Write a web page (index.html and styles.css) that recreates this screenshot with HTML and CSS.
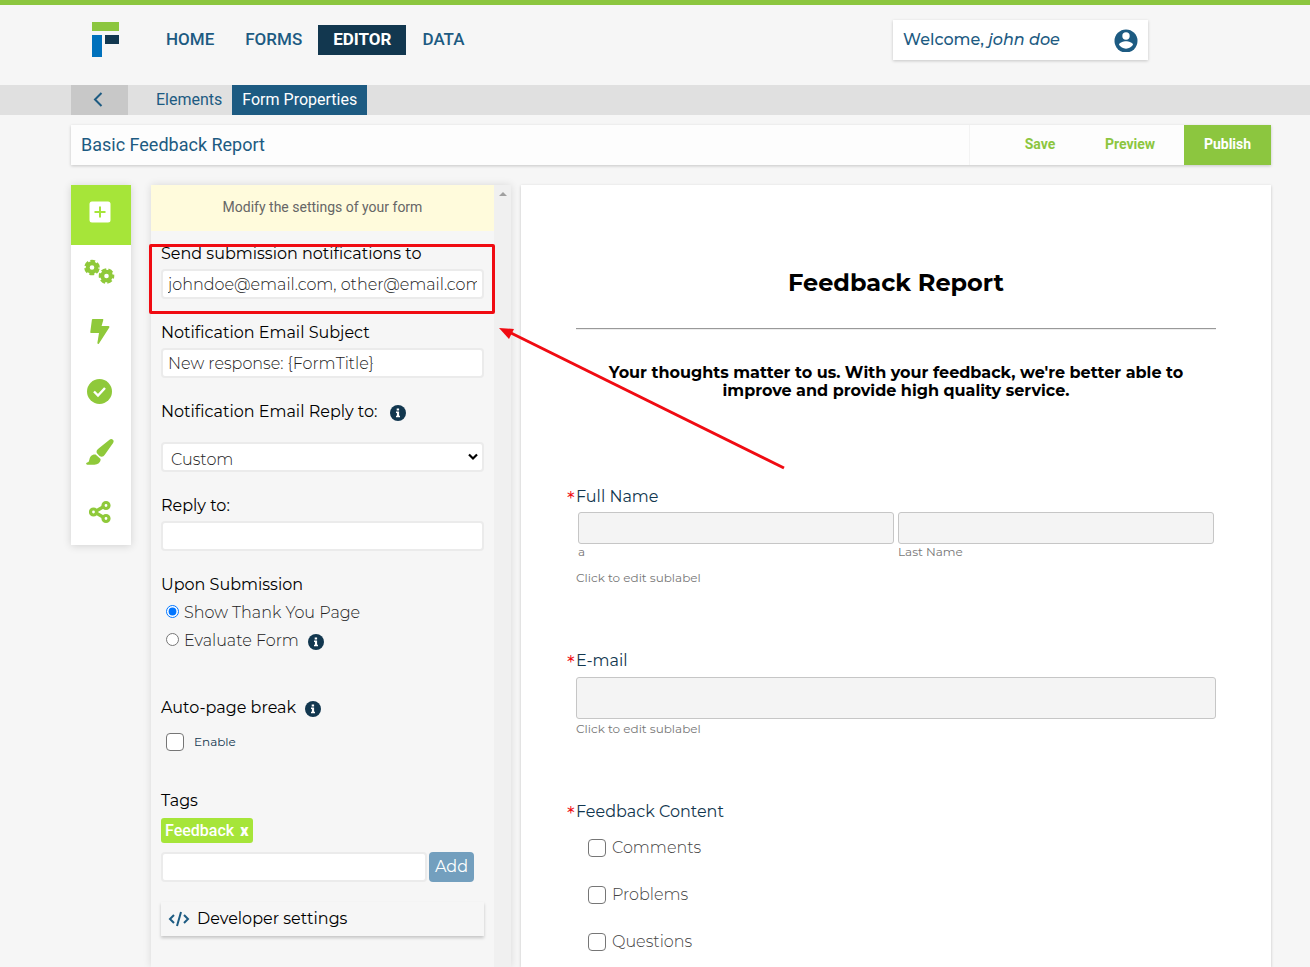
FILE: index.html
```html
<!DOCTYPE html>
<html lang="en">
<head>
<meta charset="utf-8">
<meta name="viewport" content="width=device-width, initial-scale=1">
<title>Form Properties</title>
<link rel="stylesheet" href="styles.css">
</head>
<body>
<svg class="defs" aria-hidden="true">
  <symbol id="info" viewBox="0 0 16 16"><circle cx="8" cy="8" r="8" fill="#12374f"/><path fill="#fff" d="M6.7 3.4h2.4v2H6.7zM6 6.6h3.1v4.2h.9v1.5H6v-1.5h.9V8H6z"/></symbol>
</svg>
<header class="topbar">
  <a class="logo" href="#" aria-label="Home page">
    <svg width="27" height="35" viewBox="0 0 27 35"><path fill="#8cc63f" d="M0 0h27v9H0z"/><path fill="#0071bc" d="M0 13h10v22H0z"/><path fill="#12374f" d="M13 13h14v9H13z"/></svg>
  </a>
  <nav class="main-nav">
    <a href="#">HOME</a>
    <a href="#">FORMS</a>
    <a class="active" href="#">EDITOR</a>
    <a href="#">DATA</a>
  </nav>
  <button class="welcome" type="button">
    <span>Welcome, <em>john doe</em></span>
    <svg width="24" height="24" viewBox="0 0 24 24"><circle cx="12" cy="13" r="11.500" fill="#1d5b82"/><circle cx="12" cy="8" r="3.700" fill="#fff"/><path fill="#fff" d="M5 16.800c0-2.400 4.600-3.600 7-3.600s7 1.200 7 3.600c-1.500 2.300-4 3.900-7 3.900s-5.500-1.600-7-3.900z"/></svg>
  </button>
</header>
<nav class="sub-nav">
  <button class="back" type="button" aria-label="Back"><svg width="10" height="16" viewBox="0 0 10 16"><path d="M8.500 1 2 7.500 8.500 14" fill="none" stroke="#1d5b82" stroke-width="2"/></svg></button>
  <a href="#">Elements</a>
  <a class="active" href="#">Form Properties</a>
</nav>
<section class="title-bar">
  <input class="form-name" type="text" aria-label="Form name" value="Basic Feedback Report">
  <div class="actions">
    <button type="button">Save</button>
    <button type="button">Preview</button>
    <button class="publish" type="button">Publish</button>
  </div>
</section>
<main class="workspace">
  <aside class="rail">
    <button class="active" type="button" aria-label="Add"><svg width="22" height="22" viewBox="0 0 22 22"><rect x=".5" y=".5" width="21" height="21" rx="2.500" fill="#fff"/><path d="M11 5.500v11M5.500 11h11" stroke="#a6e539" stroke-width="2"/></svg></button>
    <button type="button" aria-label="Settings">
      <svg width="32" height="26" viewBox="0 0 32 26"><g fill="none" stroke="#8fc93a"><circle cx="8" cy="8.500" r="4.300" stroke-width="4"/><circle cx="8" cy="8.500" r="6.400" stroke-width="2.800" stroke-dasharray="4.600 2.102" stroke-dashoffset="-1"/><circle cx="22.500" cy="17" r="4.300" stroke-width="4"/><circle cx="22.500" cy="17" r="6.400" stroke-width="2.800" stroke-dasharray="4.600 2.102" stroke-dashoffset="2.300"/></g></svg>
    </button>
    <button type="button" aria-label="Actions"><svg width="20" height="26" viewBox="0 0 20 26"><path fill="#8fc93a" d="M2.800 0h9.700c.6 0 1 .5.800 1.100L11.600 7h6.900c.8 0 1.200.8.800 1.400L9 24.400c-.6.900-1.800.5-1.600-.6L9 14H1.200c-.6 0-1-.5-.9-1L1.900.8c0-.5.400-.8.900-.8z"/></svg></button>
    <button type="button" aria-label="Validation"><svg width="26" height="26" viewBox="0 0 26 26"><circle cx="12.500" cy="12.500" r="12.500" fill="#8fc93a"/><path d="m7 12.500 4 4 7-7.500" fill="none" stroke="#fff" stroke-width="2.400"/></svg></button>
    <button type="button" aria-label="Design"><svg width="28" height="26" viewBox="0 0 28 26"><path fill="#8fc93a" d="M26.900.8c1 .9.900 2 .2 3.100l-8.300 11.900c-1.400 2-3.400 2.400-5.300 1.100l-2.300-2.300c-1.200-1.700-.6-3.400.8-4.700L23.500.7c1.200-1 2.400-.8 3.400.1zM9.600 15.500l5 4.500c.2 3.400-2.700 5.700-6.200 5.700H1.300c-1.300 0-1.700-1.900-.2-2.200 3.100-.5 1.500-3.900 3.700-6.300 1.200-1.400 3.100-2 4.800-1.700z"/></svg></button>
    <button type="button" aria-label="Share"><svg width="22" height="24" viewBox="0 0 22 24"><g fill="none" stroke="#8fc93a" stroke-width="3.200"><path d="m8 10.500 6-3.500M8 13.500l6 3.500"/><circle cx="4.500" cy="12" r="3"/><circle cx="17" cy="5.500" r="3"/><circle cx="17" cy="18.500" r="3"/></g></svg></button>
  </aside>
  <section class="panel">
    <div class="panel-body">
      <p class="notice">Modify the settings of your form</p>
      <form class="settings">
        <div class="field highlighted">
          <label for="notify">Send submission notifications to</label>
          <input id="notify" type="text" value="johndoe@email.com, other@email.com">
        </div>
        <div class="field">
          <label for="subject">Notification Email Subject</label>
          <input id="subject" type="text" value="New response: {FormTitle}">
        </div>
        <div class="field spaced">
          <label for="reply-mode">Notification Email Reply to: <svg class="info"><use href="#info"/></svg></label>
          <span class="select-wrap"><select id="reply-mode"><option>Custom</option></select><svg class="caret" width="12" height="8" viewBox="0 0 12 8"><path d="m2 1.500 4 4 4-4" fill="none" stroke="#000" stroke-width="2.200"/></svg></span>
        </div>
        <div class="field">
          <label for="reply">Reply to:</label>
          <input id="reply" type="text">
        </div>
        <fieldset class="radios">
          <legend>Upon Submission</legend>
          <label><input type="radio" name="after" checked>Show Thank You Page</label>
          <label><input type="radio" name="after">Evaluate Form <svg class="info"><use href="#info"/></svg></label>
        </fieldset>
        <fieldset class="page-break">
          <legend>Auto-page break <svg class="info"><use href="#info"/></svg></legend>
          <label><input class="tick" type="checkbox">Enable</label>
        </fieldset>
        <div class="tags">
          <label for="tag">Tags</label>
          <span class="tag">Feedback <button type="button" aria-label="Remove Feedback">x</button></span>
          <div class="tag-entry"><input id="tag" type="text"><button type="button">Add</button></div>
        </div>
        <button class="developer" type="button"><svg width="22" height="16" viewBox="0 0 22 16"><path d="M6 4 2 8l4 4M16 4l4 4-4 4M13 1 9 15" fill="none" stroke="#1d5b82" stroke-width="2"/></svg>Developer settings</button>
      </form>
    </div>
    <div class="scroll-track"><svg width="8" height="4" viewBox="0 0 8 4"><path fill="#a0a0a0" d="m4 0 4 4H0z"/></svg></div>
  </section>
  <form class="preview">
    <h1>Feedback Report</h1>
    <hr>
    <p class="intro">Your thoughts matter to us. With your feedback, we're better able to improve and provide high quality service.</p>
    <fieldset class="question">
      <legend><span class="req">*</span>Full Name</legend>
      <div class="names">
        <div><input id="first" type="text"><label for="first">a</label></div>
        <div><input id="last" type="text"><label for="last">Last Name</label></div>
      </div>
      <p class="sublabel">Click to edit sublabel</p>
    </fieldset>
    <div class="question email">
      <label for="email"><span class="req">*</span>E-mail</label>
      <input id="email" type="email">
      <p class="sublabel">Click to edit sublabel</p>
    </div>
    <fieldset class="question">
      <legend><span class="req">*</span>Feedback Content</legend>
      <div class="options">
        <label><input class="tick" type="checkbox">Comments</label>
        <label><input class="tick" type="checkbox">Problems</label>
        <label><input class="tick" type="checkbox">Questions</label>
      </div>
    </fieldset>
  </form>
  <svg class="arrow" width="290" height="146" viewBox="0 0 290 146" aria-hidden="true"><path d="M12 8 285 143" stroke="#f00b12" stroke-width="3"/><path fill="#f00b12" d="m0 3 15 1-5 10z"/></svg>
</main>
</body>
</html>
```

FILE: styles.css
```css
* { box-sizing: border-box; }

:root {
  --navy: #12374f;
  --blue: #1d5b82;
  --green: #8cc63f;
  --lime: #a6e539;
  --edge-left: 71px;
  --edge-right: 39px;
  --shadow: 0 1px 3px rgba(0, 0, 0, .2);
}

body {
  margin: 0;
  min-height: 100vh;
  display: flex;
  flex-direction: column;
  background: #f6f6f6;
  color: #000;
  font-family: Montserrat, Inter, sans-serif;
  font-size: 16px;
  line-height: 20px;
}

a { text-decoration: none; }
button, input, select { font: inherit; color: inherit; margin: 0; }
button { border: 0; padding: 0; background: none; cursor: pointer; }
fieldset { border: 0; margin: 0; padding: 0; min-width: 0; }
legend { padding: 0; }
.defs { position: absolute; width: 0; height: 0; }

.topbar {
  display: flex;
  align-items: flex-start;
  height: 85px;
  padding: 15px 162px 0 92px;
  border-top: 5px solid var(--green);
}
.logo { display: flex; padding-top: 2px; }
.logo svg { display: block; }
.main-nav {
  display: flex;
  gap: 1px;
  margin: 5px 0 0 32px;
  font: 500 17px/28px Roboto, sans-serif;
}
.main-nav a { padding: 0 15px 2px; color: var(--blue); }
.main-nav .active { background: var(--navy); color: #fff; font-weight: 700; }
.welcome {
  display: flex;
  align-items: center;
  justify-content: space-between;
  width: 255px;
  height: 40px;
  margin-left: auto;
  padding: 0 10px;
  background: #fff;
  box-shadow: var(--shadow);
  color: var(--blue);
  font-weight: 500;
}

.sub-nav {
  display: flex;
  height: 30px;
  padding-left: var(--edge-left);
  background: #e0e0e0;
  font: 16px/30px Roboto, sans-serif;
}
.sub-nav a { padding: 0 10px; color: var(--blue); }
.sub-nav .active { background: var(--blue); color: #fff; }
.back {
  display: flex;
  align-items: center;
  justify-content: center;
  width: 57px;
  margin-right: 18px;
  padding-right: 3px;
  background: #c8c8c8;
}

.title-bar {
  display: flex;
  height: 40px;
  margin: 10px var(--edge-right) 20px var(--edge-left);
  background: #fdfdfd;
  box-shadow: var(--shadow);
}
.form-name {
  flex: 1;
  min-width: 0;
  padding: 0 10px;
  border: 0;
  border-right: 1px solid #f3f3f3;
  background: none;
  color: var(--blue);
  font: 18px/40px Roboto, sans-serif;
}
.actions { display: flex; width: 301px; justify-content: flex-end; }
.actions button { width: 90px; padding-bottom: 2px; color: var(--green); font: 700 14px/38px Roboto, sans-serif; }
.actions .publish { width: 87px; margin-left: 9px; background: var(--green); color: #fff; }

.workspace {
  position: relative;
  flex: 1;
  display: flex;
  align-items: stretch;
  padding: 0 var(--edge-right) 0 var(--edge-left);
}
.rail {
  align-self: flex-start;
  width: 60px;
  margin-right: 20px;
  background: #fff;
  box-shadow: 0 1px 8px rgba(0, 0, 0, .15);
}
.rail button {
  display: flex;
  align-items: center;
  justify-content: center;
  width: 60px;
  height: 60px;
  padding: 0 2px 6px 0;
}
.rail .active { background: var(--lime); }

.panel {
  display: flex;
  width: 360px;
  margin-right: 10px;
  box-shadow: 0 0 8px rgba(0, 0, 0, .12);
}
.panel-body { flex: 1; min-width: 0; }
.scroll-track { width: 17px; padding-top: 7px; background: #f0f0f0; text-align: center; }
.scroll-track svg { display: block; margin: 0 auto; }
.notice {
  margin: 0;
  padding-bottom: 2px;
  background: #fffbdc;
  color: #666;
  text-align: center;
  font: 14px/44px Roboto, sans-serif;
}
.settings { padding: 13px 10px 0; }
.field { display: flex; flex-direction: column; gap: 5px; margin-bottom: 24px; }
.field.spaced { gap: 20px; }
.field label { display: flex; align-items: center; gap: 13px; }
.settings input[type="text"], .settings select {
  width: 100%;
  height: 30px;
  padding: 0 5px;
  border: 2px solid #ebebeb;
  border-radius: 4px;
  background: #fff;
  color: #222;
  font-weight: 300;
}
.settings select { appearance: none; padding: 5px 8px 0; }
.select-wrap { position: relative; display: flex; }
.caret { position: absolute; right: 5px; top: 11px; }
.highlighted { position: relative; }
.highlighted::after {
  content: "";
  position: absolute;
  inset: 0 -11px -15px -12px;
  border: 3px solid #f00b12;
  border-radius: 2px;
  pointer-events: none;
}
.info { flex: none; width: 16px; height: 16px; margin-top: 2px; }

.radios { margin-bottom: 43px; }
.radios legend { margin-bottom: 4px; }
.radios label {
  display: flex;
  align-items: center;
  height: 28px;
  padding-left: 5px;
  color: #222;
  font-weight: 300;
}
.radios input { width: 13px; height: 13px; margin: 0 5px 3px 0; }
.radios .info { margin-left: 9px; }
.page-break { margin-bottom: 39px; }
.page-break legend { display: flex; align-items: center; gap: 9px; margin-bottom: 14px; }
.page-break label {
  display: flex;
  align-items: center;
  gap: 10px;
  padding-left: 5px;
  color: var(--navy);
  font-size: 12px;
}
.tick {
  appearance: none;
  width: 18px;
  height: 18px;
  border: 1px solid #767676;
  border-radius: 4px;
  background: #fff;
}
.tick:checked { background: var(--blue); }

.tags { display: flex; flex-direction: column; align-items: flex-start; margin-bottom: 20px; }
.tag {
  display: flex;
  gap: 6px;
  margin: 7px 0 9px;
  padding: 0 5px 0 4px;
  border-radius: 3px;
  background: var(--lime);
  color: #fff;
  font: 500 16px/25px Roboto, sans-serif;
}
.tag button { font-weight: 900; }
.tag-entry { display: flex; gap: 2px; width: 100%; padding-right: 10px; }
.tag-entry input { flex: 1; min-width: 0; }
.tag-entry button { width: 45px; border-radius: 4px; background: #739fbe; color: #fff; }
.developer {
  display: flex;
  align-items: center;
  gap: 7px;
  width: 100%;
  height: 34px;
  padding: 0 7px;
  box-shadow: 0 2px 3px rgba(0, 0, 0, .2);
}

.preview {
  flex: 1;
  min-width: 0;
  padding: 84px 55px 0;
  background: #fff;
  box-shadow: var(--shadow);
}
.preview h1 { margin: 0 0 31px; text-align: center; font-size: 24px; line-height: 28px; font-weight: 700; }
.preview hr { width: 100%; height: 2px; margin: 0 0 34px; border: 0; border-top: 1px solid #999; border-bottom: 1px solid #ededed; }
.intro { margin: 0 0 87px; padding: 0 20px; text-align: center; font-weight: 700; line-height: 18px; }
.question { margin-bottom: 65px; }
.question legend, .question > label { display: flex; margin-left: -9px; color: var(--navy); }
.req { width: 9px; padding-top: 2px; color: #f00b12; font-size: 20px; }
.names { display: flex; gap: 4px; padding: 3px 2px 0; }
.names div { flex: 1; min-width: 0; }
.names label, .sublabel { display: block; margin: 0; color: #777; font-size: 12px; line-height: 16px; }
.names + .sublabel { margin-top: 10px; }
.preview input:not(.tick) {
  display: block;
  width: 100%;
  height: 32px;
  padding: 0 8px;
  border: 1px solid #c6c6c6;
  border-radius: 3px;
  background: #f4f4f4;
}
.preview .email input:not(.tick) { height: 42px; margin: 4px 0 2px; }
.question:last-child { margin-bottom: 0; }
.options { display: flex; flex-direction: column; gap: 27px; padding: 14px 0 0 12px; }
.options label { display: flex; align-items: center; gap: 6px; color: #444; font-weight: 300; }

.arrow { position: absolute; left: 499px; top: 140px; pointer-events: none; }
```
